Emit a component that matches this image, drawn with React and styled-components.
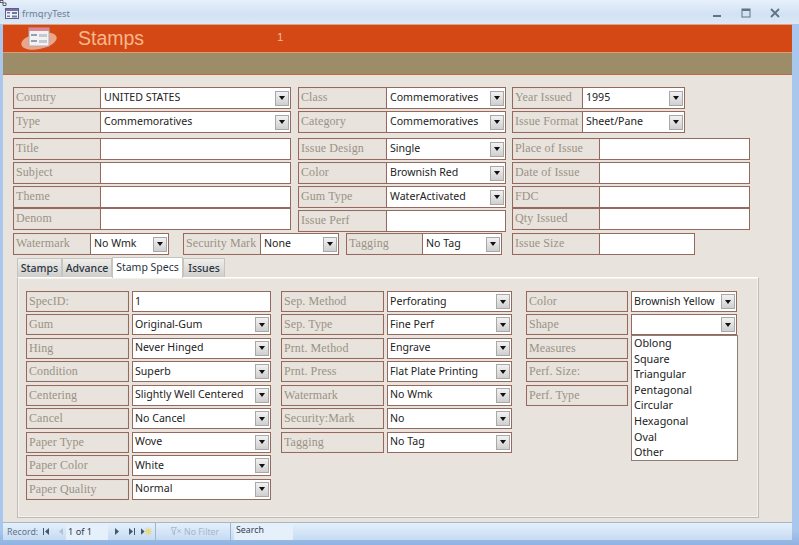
import React from "react";
import styled, { createGlobalStyle } from "styled-components";

const Global = createGlobalStyle`
  html, body { margin: 0; padding: 0; background: #e8e3dd; }
  body { font-family: "Noto Sans", sans-serif; }
`;

const Win = styled.div`
  width: 799px;
  height: 545px;
  display: flex;
  flex-direction: column;
  overflow: hidden;
  background: linear-gradient(#a9c6ec 530px, #8fb2e0);
`;

const TitleBar = styled.div`
  height: 24px;
  flex: none;
  display: flex;
  align-items: center;
  padding: 2px 19px 0 5px;
  box-sizing: border-box;
  background: linear-gradient(#e6f0fb, #d2e2f4 60%, #dde7f2);
  color: #70808f;
  font-size: 9.4px;
  position: relative;
`;

const CornerMark = styled.svg`
  position: absolute;
  left: 0;
  top: 0;
`;

const TitleText = styled.span`
  margin-left: 3px;
  flex: 1;
`;

const WinButtons = styled.div`
  display: flex;
  align-items: center;
  gap: 19px;
`;

const Middle = styled.div`
  flex: 1;
  display: flex;
  padding: 0 7px 0 3px;
  min-height: 0;
`;

const Form = styled.div`
  flex: 1;
  background: #e8e3dd;
  display: flex;
  flex-direction: column;
  position: relative;
`;

const Header = styled.div`
  height: 28px;
  flex: none;
  background: #d34815;
  border-top: 1px solid #e2a08a;
  box-sizing: border-box;
  display: flex;
  align-items: center;
  color: #f8b78c;
  padding-left: 17px;
`;

const HeaderTitle = styled.span`
  font-family: "Liberation Sans", sans-serif;
  font-size: 19.5px;
  margin-left: 20px;
  width: 199px;
`;

const HeaderNum = styled.span`
  font-family: "Liberation Sans", sans-serif;
  font-size: 11.5px;
  margin-bottom: 3px;
`;

const Band = styled.div`
  height: 21px;
  flex: none;
  background: #9c8d68;
  border-top: 1px solid #e39a76;
  border-bottom: 1px solid #c0684a;
`;

const TopArea = styled.div`
  display: grid;
  grid-template-columns: 278px 207px 238px;
  column-gap: 7px;
  padding: 12px 0 0 10px;
`;

const Stack = styled.div`
  display: flex;
  flex-direction: column;
  width: ${(p) => p.$w || "auto"};
  margin-left: ${(p) => p.$ml || 0};
`;

const Row = styled.div`
  display: flex;
  height: 22px;
  margin-top: ${(p) => p.$mt || 0}px;
  margin-left: ${(p) => p.$ml || 0}px;
`;

const Label = styled.div`
  width: ${(p) => p.$w}px;
  flex: none;
  box-sizing: border-box;
  border: 1px solid #96695f;
  box-shadow: inset 0 0 1px #e0bdb4;
  background: #e8e3dd;
  color: #9a9285;
  font-family: "Liberation Serif", serif;
  font-size: 12px;
  letter-spacing: 0.1px;
  padding: 1px 0 0 2px;
  line-height: 17px;
  white-space: nowrap;
  overflow: hidden;
`;

const Value = styled.div`
  width: ${(p) => p.$w}px;
  flex: none;
  box-sizing: border-box;
  border: 1px solid #96695f;
  border-left-width: ${(p) => (p.$joined ? 0 : 1)}px;
  margin-left: ${(p) => p.$ml || 0}px;
  background: #fff;
  color: #222;
  font-size: 10.6px;
  line-height: 16px;
  padding-left: ${(p) => (p.$joined ? 3 : 2)}px;
  display: flex;
  align-items: center;
  justify-content: space-between;
  white-space: nowrap;
  overflow: hidden;
`;

const Arrow = styled.span`
  width: 14px;
  height: 15px;
  flex: none;
  margin-right: 1px;
  box-sizing: border-box;
  border: 1px solid #a8a8a8;
  background: linear-gradient(#f2f2f2, #cfcfcf);
  display: flex;
  align-items: center;
  justify-content: center;
  &::after {
    content: "";
    border-left: 3.5px solid transparent;
    border-right: 3.5px solid transparent;
    border-top: 4px solid #111;
  }
`;

const ValueText = styled.span`
  margin-bottom: 2px;
`;

const Field = ({ label, value, lw, vw, arrow, mt, ml }) => (
  <Row $mt={mt} $ml={ml}>
    <Label $w={lw}>{label}</Label>
    <Value $w={vw} $joined>
      <ValueText>{value}</ValueText>
      {arrow && <Arrow />}
    </Value>
  </Row>
);

const LastRow = styled.div`
  display: flex;
  margin: 1px 0 0 10px;
`;

const Tabs = styled.div`
  display: flex;
  align-items: flex-end;
  height: 21px;
  margin: 1px 0 0 14px;
`;

const Tab = styled.div`
  height: ${(p) => (p.$on ? 21 : 19)}px;
  width: ${(p) => p.$w}px;
  box-sizing: border-box;
  margin-bottom: ${(p) => (p.$on ? -1 : 0)}px;
  position: relative;
  z-index: ${(p) => (p.$on ? 1 : 0)};
  border: 1px solid #c4c4c0;
  border-bottom: 0;
  background: ${(p) => (p.$on ? "#fff" : "linear-gradient(#f0eeeb, #d0cecb)")};
  color: #2a3340;
  font-size: 10.5px;
  font-weight: ${(p) => (p.$on ? 400 : 500)};
  line-height: 18px;
  text-align: center;
  white-space: nowrap;
`;

const Panel = styled.div`
  width: 742px;
  height: 241px;
  flex: none;
  box-sizing: border-box;
  margin-left: 14px;
  border: 1px solid #bdbbb5;
  border-top-color: #fff;
  box-shadow: inset 0 0 0 1px #f4f2ee;
  padding: 13px 0 0 8px;
  display: flex;
  position: relative;
`;

const SpecRow = styled.div`
  display: flex;
  height: 21px;
  margin-bottom: 2.45px;
`;

const Dropdown = styled.div`
  position: absolute;
  left: 613px;
  top: 57px;
  width: 107px;
  height: 126px;
  box-sizing: border-box;
  background: #fff;
  border: 1px solid #8d7d75;
  color: #222;
  font-size: 10.8px;
  line-height: 15.6px;
  padding-left: 2px;
`;

const DropItem = styled.div`
  margin-top: ${(p) => (p.$first ? -1 : 0)}px;
`;

const StatusBar = styled.div`
  height: 18px;
  flex: none;
  margin: 0 7px 5px 3px;
  display: flex;
  align-items: center;
  box-sizing: border-box;
  border-top: 1px solid #a9b6c6;
  background: linear-gradient(#e4f0fc, #c6dbf2);
  color: #5f7388;
  font-size: 8.8px;
  padding-left: 4px;
`;

const RecLabel = styled.span`
  width: 33px;
`;

const NavIcon = styled.svg`
  flex: none;
  margin: 0 ${(p) => p.$mr || 0}px 0 ${(p) => p.$ml || 0}px;
`;

const RecBox = styled.span`
  width: 42px;
  height: 16px;
  line-height: 15px;
  background: #e6f0fb;
  color: #30404f;
  padding-left: 2px;
  font-size: 9.2px;
  box-sizing: border-box;
`;

const Sep = styled.span`
  width: 1px;
  height: 17px;
  background: #9eb6d0;
  margin-left: ${(p) => p.$ml || 0}px;
`;

const NoFilter = styled.span`
  color: #a8b6c4;
  font-size: 8.8px;
  display: flex;
  align-items: center;
  gap: 3px;
  width: 74px;
  padding-left: 15px;
  box-sizing: border-box;
`;

const SearchBox = styled.span`
  width: 59px;
  height: 17px;
  line-height: 15px;
  margin-left: 3px;
  background: #e6f0fb;
  color: #30404f;
  padding-left: 2px;
  font-size: 8.8px;
  box-sizing: border-box;
`;

const topCol1 = [
  ["Country", "UNITED STATES", true],
  ["Type", "Commemoratives", true],
  ["Title", "", false],
  ["Subject", "", false],
  ["Theme", "", false],
  ["Denom", "", false],
];
const topCol2 = [
  ["Class", "Commemoratives", true],
  ["Category", "Commemoratives", true],
  ["Issue Design", "Single", true],
  ["Color", "Brownish Red", true],
  ["Gum Type", "WaterActivated", true],
  ["Issue Perf", "", false],
];
const gaps = [0, 2, 5, 2, 2, 0];

const spec1 = [
  ["SpecID:", "1", false],
  ["Gum", "Original-Gum", true],
  ["Hing", "Never Hinged", true],
  ["Condition", "Superb", true],
  ["Centering", "Slightly Well Centered", true],
  ["Cancel", "No Cancel", true],
  ["Paper Type", "Wove", true],
  ["Paper Color", "White", true],
  ["Paper Quality", "Normal", true],
];
const spec2 = [
  ["Sep. Method", "Perforating", true],
  ["Sep. Type", "Fine Perf", true],
  ["Prnt. Method", "Engrave", true],
  ["Prnt. Press", "Flat Plate Printing", true],
  ["Watermark", "No Wmk", true],
  ["Security:Mark", "No", true],
  ["Tagging", "No Tag", true],
];
const spec3 = [
  ["Color", "Brownish Yellow"],
  ["Shape", ""],
];
const spec3Labels = ["Measures", "Perf. Size:", "Perf. Type"];
const shapes = ["Oblong", "Square", "Triangular", "Pentagonal", "Circular", "Hexagonal", "Oval", "Other"];

const FormIcon = () => (
  <svg width="14" height="11" viewBox="0 0 14 11">
    <rect x="0.5" y="0.5" width="13" height="10" fill="#eef2f8" stroke="#5d5f86" />
    <rect x="1" y="1" width="12" height="2" fill="#7c6f9f" />
    <rect x="2" y="4" width="3" height="1.5" fill="#6b7aa0" />
    <rect x="7" y="4" width="5" height="2" fill="#6b7aa0" />
    <rect x="2" y="7.5" width="3" height="1.5" fill="#6b7aa0" />
    <rect x="7" y="7.5" width="5" height="2" fill="#6b7aa0" />
  </svg>
);

const Logo = () => (
  <svg width="38" height="26" viewBox="0 0 38 26">
    <ellipse cx="19" cy="15" rx="18" ry="8" transform="rotate(-12 19 15)" fill="#eaa68a" />
    <rect x="9" y="2" width="20" height="18" fill="#f3f1f2" stroke="#b9a9ad" />
    <rect x="9" y="2" width="20" height="3" fill="#d88a98" />
    <rect x="11" y="8" width="6" height="2" fill="#98a0b0" />
    <rect x="19" y="8" width="8" height="3" fill="#c4c8d2" />
    <rect x="11" y="14" width="6" height="2" fill="#98a0b0" />
    <rect x="19" y="14" width="8" height="3" fill="#c4c8d2" />
  </svg>
);

export default function App() {
  return (
    <Win>
      <Global />
      <TitleBar>
        <CornerMark width="7" height="6" viewBox="0 0 7 6">
          <path d="M0 0.5h3v2H0zM3 3h3v2.5H3z" fill="#fff" stroke="#33364e" strokeWidth="0.8" />
        </CornerMark>
        <FormIcon />
        <TitleText>frmqryTest</TitleText>
        <WinButtons>
          <svg width="10" height="10" viewBox="0 0 10 10"><rect x="1" y="7" width="8" height="2" fill="#5f7488" /></svg>
          <svg width="10" height="10" viewBox="0 0 10 10"><rect x="1" y="1" width="8" height="8" fill="none" stroke="#5f7488" /><rect x="1" y="1" width="8" height="2" fill="#5f7488" /></svg>
          <svg width="10" height="10" viewBox="0 0 10 10"><path d="M1 1l8 8M9 1l-8 8" stroke="#5f7488" strokeWidth="1.8" /></svg>
        </WinButtons>
      </TitleBar>
      <Middle>
        <Form>
          <Header>
            <Logo />
            <HeaderTitle>Stamps</HeaderTitle>
            <HeaderNum>1</HeaderNum>
          </Header>
          <Band />
          <TopArea>
            <Stack>
              {topCol1.map(([l, v, a], i) => (
                <Field key={l} label={l} value={v} arrow={a} lw={88} vw={190} mt={gaps[i]} />
              ))}
            </Stack>
            <Stack>
              {topCol2.map(([l, v, a], i) => (
                <Field key={l} label={l} value={v} arrow={a} lw={89} vw={119} mt={i === 5 ? 2 : gaps[i]} />
              ))}
            </Stack>
            <Stack>
              <Field label="Year Issued" value="1995" arrow lw={71} vw={102} />
              <Field label="Issue Format" value="Sheet/Pane" arrow lw={71} vw={102} mt={2} />
              <Field label="Place of Issue" value="" lw={88} vw={150} mt={5} />
              <Field label="Date of Issue" value="" lw={88} vw={150} mt={2} />
              <Field label="FDC" value="" lw={88} vw={150} mt={2} />
              <Field label="Qty Issued" value="" lw={88} vw={150} />
            </Stack>
          </TopArea>
          <LastRow>
            <Field label="Watermark" value="No Wmk" arrow lw={78} vw={78} />
            <Field label="Security Mark" value="None" arrow lw={78} vw={78} ml={14} />
            <Field label="Tagging" value="No Tag" arrow lw={77} vw={79} ml={7} />
            <Field label="Issue Size" value="" lw={88} vw={95} ml={10} />
          </LastRow>
          <Tabs>
            <Tab $w={45}>Stamps</Tab>
            <Tab $w={50}>Advance</Tab>
            <Tab $w={71} $on>Stamp Specs</Tab>
            <Tab $w={42}>Issues</Tab>
          </Tabs>
          <Panel>
            <Stack $w="245px">
              {spec1.map(([l, v, a]) => (
                <SpecRow key={l}>
                  <Label $w={103}>{l}</Label>
                  <Value $w={139} $ml={3}>
                    <ValueText>{v}</ValueText>
                    {a && <Arrow />}
                  </Value>
                </SpecRow>
              ))}
            </Stack>
            <Stack $w="245px" $ml="10px">
              {spec2.map(([l, v, a]) => (
                <SpecRow key={l}>
                  <Label $w={103}>{l}</Label>
                  <Value $w={125} $ml={3}>
                    <ValueText>{v}</ValueText>
                    {a && <Arrow />}
                  </Value>
                </SpecRow>
              ))}
            </Stack>
            <Stack $w="212px">
              {spec3.map(([l, v]) => (
                <SpecRow key={l}>
                  <Label $w={102}>{l}</Label>
                  <Value $w={106} $ml={3}>
                    <ValueText>{v}</ValueText>
                    <Arrow />
                  </Value>
                </SpecRow>
              ))}
              {spec3Labels.map((l) => (
                <SpecRow key={l}>
                  <Label $w={102}>{l}</Label>
                </SpecRow>
              ))}
            </Stack>
            <Dropdown>
              {shapes.map((s, i) => (
                <DropItem key={s} $first={i === 0}>{s}</DropItem>
              ))}
            </Dropdown>
          </Panel>
        </Form>
      </Middle>
      <StatusBar>
        <RecLabel>Record:</RecLabel>
        <NavIcon width="6" height="7" viewBox="0 0 6 7" $ml={3}>
          <path d="M0.5 0v7" stroke="#44586c" /><path d="M6 0v7L2 3.5z" fill="#44586c" />
        </NavIcon>
        <NavIcon width="4" height="7" viewBox="0 0 4 7" $ml={10} $mr={3}>
          <path d="M4 0v7L0 3.5z" fill="#b4c2d0" />
        </NavIcon>
        <RecBox>1 of 1</RecBox>
        <NavIcon width="4" height="7" viewBox="0 0 4 7" $ml={7}>
          <path d="M0 0v7l4-3.5z" fill="#44586c" />
        </NavIcon>
        <NavIcon width="6" height="7" viewBox="0 0 6 7" $ml={10}>
          <path d="M0 0v7l4-3.5z" fill="#44586c" /><path d="M5.5 0v7" stroke="#44586c" />
        </NavIcon>
        <NavIcon width="11" height="9" viewBox="0 0 12 9" $ml={6}>
          <path d="M0 1v7l4-3.5z" fill="#44586c" />
          <path d="M8 0v9M4 4.5h8M5 1.5l6 6M11 1.5l-6 6" stroke="#e8d97a" strokeWidth="1.2" />
        </NavIcon>
        <Sep $ml={3} />
        <NoFilter>
          <svg width="10" height="9" viewBox="0 0 11 9">
            <path d="M0 0h6L3.8 4v4L2.2 7V4zM7 2l4 4M11 2L7 6" fill="none" stroke="#a8b6c4" />
          </svg>
          No Filter
        </NoFilter>
        <Sep />
        <SearchBox>Search</SearchBox>
      </StatusBar>
    </Win>
  );
}
